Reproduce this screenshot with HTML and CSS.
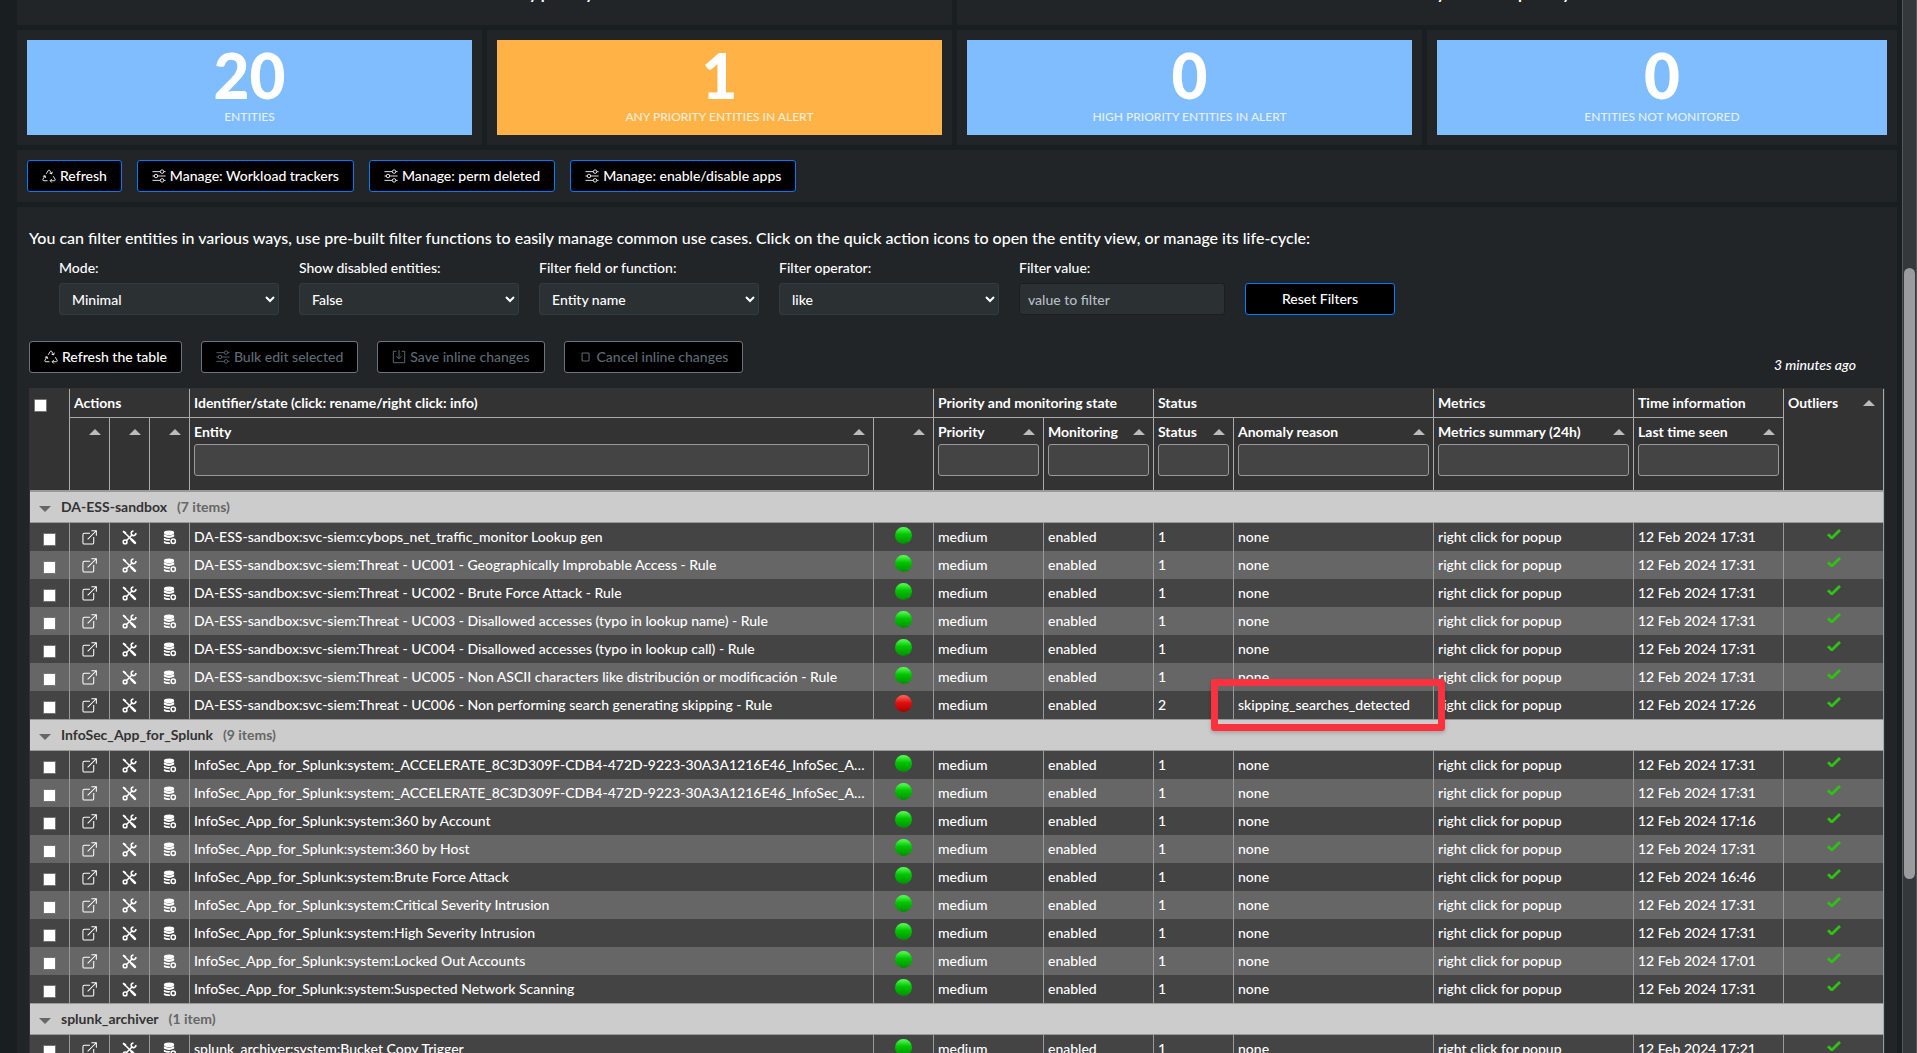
FILE: index.html
```html
<!DOCTYPE html>
<html lang="en">
  <head>
    <meta charset="UTF-8" />
    <meta name="viewport" content="width=device-width, initial-scale=1.0" />
    <title>Workload entities</title>
    <link rel="stylesheet" href="styles.css">
  </head>
  <body>
    <!-- Icon sprites -->
    <svg class="sprites" aria-hidden="true">
      <symbol id="i-recycle" viewBox="0 0 16 16">
        <g fill="none" stroke="currentColor" stroke-width="1">
          <path d="M4.800 5.500 7.300 1.500Q8 .7 8.700 1.500L11 5.500M8.600 4.800l2.500.8.7-2.500" />
          <path d="M12.800 8.200l2.200 3.500q.5 1.500-.9 1.700H9.500M11.300 11.300l-2 2.100 2 2.100" />
          <path d="M6.300 13.400H2.100q-1.600-.2-1.100-1.700L3.500 7.800M1 8.400l2.500-.8.8 2.600" />
        </g>
      </symbol>
      <symbol id="i-sliders" viewBox="0 0 16 16">
        <g fill="none" stroke="currentColor" stroke-width="1">
          <path d="M.5 3h9M13.500 3h2M.5 8h2M6.500 8h9M.5 13h9M13.500 13h2" />
          <circle cx="11.500" cy="3" r="2" />
          <circle cx="4.500" cy="8" r="2" />
          <circle cx="11.500" cy="13" r="2" />
        </g>
      </symbol>
      <symbol id="i-save" viewBox="0 0 16 16">
        <g fill="none" stroke="currentColor" stroke-width="1.1">
          <path d="M5 1.500H1.500v13h13v-13H11M8 0v10M5 7l3 3 3-3" />
        </g>
      </symbol>
      <symbol id="i-box" viewBox="0 0 16 16">
        <rect x="3.500" y="3.500" width="8" height="9" rx="1" fill="none" stroke="currentColor" stroke-width="1.200" />
      </symbol>
      <symbol id="i-open" viewBox="0 0 16 16">
        <g fill="none" stroke="currentColor" stroke-width="1.100">
          <path d="M8.500 3.500H2.500q-1.500 0-1.500 1.500v8.500q0 1.500 1.500 1.500H11q1.500 0 1.500-1.500V7.500" />
          <path d="M6 10 15.300.8M10 .8h5.300V6" />
        </g>
      </symbol>
      <symbol id="i-tools" viewBox="0 0 16 16">
        <g fill="none" stroke="currentColor">
          <path stroke-width="1.600" d="M1.500 1.500 11 11M4.800 11.200 11.200 4.800" />
          <path stroke-width="2.800" stroke-linecap="round" d="M10.300 10.300l3.500 3.500" />
          <path stroke-width="1.700" d="M14.800 3.200A2.500 2.500 0 1 1 12.300 1" />
          <circle cx="3.300" cy="12.700" r="2" stroke-width="1.600" />
        </g>
        <path fill="currentColor" d="M.5 1.500 1.500.5l3 2-.2 1.300-1.300.2z" />
      </symbol>
      <symbol id="i-db" viewBox="0 0 16 16">
        <g fill="currentColor">
          <ellipse cx="7.500" cy="3" rx="5.500" ry="2.500" />
          <path d="M2 4.500q5.500 3 11 0V7q-5.500 3-11 0zM2 8.200q3.500 2 7 1.300-1 1-1 2-3.500.3-6-1zM2 11.700q2.500 1.400 6 1.300.3 1 1 1.800-4.500.6-7-1z" />
        </g>
        <circle cx="12" cy="12" r="2.300" fill="none" stroke="currentColor" stroke-width="1.600" />
      </symbol>
      <symbol id="i-tick" viewBox="0 0 14 10">
        <path d="M1 5.200 4.800 9 13 1" fill="none" stroke="#2dc214" stroke-width="2.800" />
      </symbol>
    </svg>

    <main class="dashboard">
      <div class="row row-charts">
        <section class="panel"><h2>Entities distribution by priority</h2></section>
        <section class="panel"><h2>Entities distribution by state and priority</h2></section>
      </div>

      <div class="row row-singles">
        <section class="panel"><div class="single blue"><strong>20</strong><span>ENTITIES</span></div></section>
        <section class="panel"><div class="single orange"><strong>1</strong><span>ANY PRIORITY ENTITIES IN ALERT</span></div></section>
        <section class="panel"><div class="single blue"><strong>0</strong><span>HIGH PRIORITY ENTITIES IN ALERT</span></div></section>
        <section class="panel"><div class="single blue"><strong>0</strong><span>ENTITIES NOT MONITORED</span></div></section>
      </div>

      <section class="panel button-bar">
        <button class="btn btn-primary" type="button"><svg><use href="#i-recycle" /></svg>Refresh</button>
        <button class="btn btn-primary" type="button"><svg><use href="#i-sliders" /></svg>Manage: Workload trackers</button>
        <button class="btn btn-primary" type="button"><svg><use href="#i-sliders" /></svg>Manage: perm deleted</button>
        <button class="btn btn-primary" type="button"><svg><use href="#i-sliders" /></svg>Manage: enable/disable apps</button>
      </section>

      <section class="panel entities">
        <p class="intro">You can filter entities in various ways, use pre-built filter functions to easily manage common use cases. Click on the quick action icons to open the entity view, or manage its life-cycle:</p>

        <form class="filters">
          <div class="field">
            <label for="mode">Mode:</label>
            <select id="mode"><option>Minimal</option></select>
          </div>
          <div class="field">
            <label for="disabled">Show disabled entities:</label>
            <select id="disabled"><option>False</option></select>
          </div>
          <div class="field">
            <label for="filter-field">Filter field or function:</label>
            <select id="filter-field"><option>Entity name</option></select>
          </div>
          <div class="field">
            <label for="operator">Filter operator:</label>
            <select id="operator"><option>like</option></select>
          </div>
          <div class="field field-value">
            <label for="filter-value">Filter value:</label>
            <input id="filter-value" type="text" placeholder="value to filter">
          </div>
          <button class="btn btn-primary btn-reset" type="button">Reset Filters</button>
        </form>

        <div class="table-tools">
          <button class="btn" type="button"><svg><use href="#i-recycle" /></svg>Refresh the table</button>
          <button class="btn" type="button" disabled><svg><use href="#i-sliders" /></svg>Bulk edit selected</button>
          <button class="btn" type="button" disabled><svg><use href="#i-save" /></svg>Save inline changes</button>
          <button class="btn" type="button" disabled><svg><use href="#i-box" /></svg>Cancel inline changes</button>
          <em class="updated">3 minutes ago</em>
        </div>

        <table class="grid">
          <colgroup>
            <col class="w40"><col class="w40"><col class="w40"><col class="w40">
            <col>
            <col class="w60"><col class="w110"><col class="w110"><col class="w80">
            <col class="w200"><col class="w200"><col class="w150"><col class="w100">
          </colgroup>
          <thead>
            <tr class="head-groups">
              <th rowspan="2"><input type="checkbox" aria-label="Select all"></th>
              <th colspan="3">Actions</th>
              <th colspan="2">Identifier/state (click: rename/right click: info)</th>
              <th colspan="2">Priority and monitoring state</th>
              <th colspan="2">Status</th>
              <th>Metrics</th>
              <th>Time information</th>
              <th rowspan="2"><div class="title">Outliers<i class="sort"></i></div></th>
            </tr>
            <tr class="head-cols">
              <th><div class="title"><i class="sort"></i></div></th>
              <th><div class="title"><i class="sort"></i></div></th>
              <th><div class="title"><i class="sort"></i></div></th>
              <th><div class="title">Entity<i class="sort"></i></div><input type="search" aria-label="Entity"></th>
              <th><div class="title"><i class="sort"></i></div></th>
              <th><div class="title">Priority<i class="sort"></i></div><input type="search" aria-label="Priority"></th>
              <th><div class="title">Monitoring<i class="sort"></i></div><input type="search" aria-label="Monitoring"></th>
              <th><div class="title">Status<i class="sort"></i></div><input type="search" aria-label="Status"></th>
              <th><div class="title">Anomaly reason<i class="sort"></i></div><input type="search" aria-label="Anomaly reason"></th>
              <th><div class="title">Metrics summary (24h)<i class="sort"></i></div><input type="search" aria-label="Metrics summary"></th>
              <th><div class="title">Last time seen<i class="sort"></i></div><input type="search" aria-label="Last time seen"></th>
            </tr>
          </thead>
          <tbody id="entities"></tbody>
        </table>
      </section>
    </main>

    <div class="scrollbar"><div class="thumb"></div></div>
    <script src="main.js"></script>
  </body>
</html>
```
FILE: styles.css
```css
* {
  box-sizing: border-box;
}

body {
  margin: 0;
  height: 100vh;
  overflow: hidden;
  display: flex;
  background: #191e21;
  color: #fff;
  font-family: Lato, "Liberation Sans", sans-serif;
  font-size: 14px;
  font-weight: 500;
  line-height: 20px;
}

button,
input,
select {
  font: inherit;
  color: inherit;
}

.sprites {
  position: absolute;
  width: 0;
  height: 0;
}

.dashboard {
  flex: 1;
  min-width: 0;
  display: flex;
  flex-direction: column;
  gap: 5px;
  padding: 0 5px 0 17px;
}

.panel {
  background: #212528;
  padding: 10px;
}

.row {
  display: flex;
  flex-shrink: 0;
  gap: 5px;
}

.row-charts .panel {
  flex: 0 0 calc(50% - 5px);
}

.row-singles .panel {
  flex: 0 0 calc(25% - 5px);
}

.row .panel:last-child {
  flex: 1;
}

/* Charts are scrolled out, only their bottom edge is left */
.row-charts {
  margin-top: -27px;
}

.row-charts .panel {
  height: 52px;
}

.row-charts h2 {
  margin: 0;
  font-size: 16px;
  line-height: 20px;
  text-align: center;
}

/* Single values */
.single {
  height: 95px;
  display: flex;
  flex-direction: column;
  align-items: center;
}

.single strong {
  font-size: 62px;
  font-weight: 900;
  line-height: 71px;
}

.single span {
  font-size: 12px;
  line-height: 12px;
  color: rgba(255, 255, 255, 0.8);
}

.blue {
  background: #80bdff;
}

.orange {
  background: #ffb347;
}

/* Buttons */
.button-bar {
  display: flex;
  gap: 15px;
}

.btn {
  height: 32px;
  display: flex;
  align-items: center;
  justify-content: center;
  gap: 4px;
  padding: 0 14px;
  background: #000;
  border: 1px solid #6c757d;
  border-radius: 3px;
  white-space: nowrap;
}

.btn svg {
  width: 14px;
  height: 14px;
}

.btn:disabled {
  color: #5f6973;
}

.btn-primary {
  border-color: #007bff;
}

/* Filters */
.entities {
  padding: 21px 12px 0;
}

.intro {
  margin: 0;
  font-size: 16px;
}

.filters {
  display: flex;
  align-items: flex-end;
  gap: 20px;
  margin: 10px 0 0 30px;
}

.field {
  width: 220px;
  display: flex;
  flex-direction: column;
  gap: 5px;
}

.field-value {
  width: 206px;
}

.field select,
.field input {
  height: 32px;
  background: #2b3033;
  border: 1px solid #2f3c46;
  border-radius: 3px;
  padding: 0 8px;
}

.field input {
  border-color: #1a1e21;
}

.field input::placeholder {
  color: #b5bcc4;
}

.btn-reset {
  width: 150px;
}

.table-tools {
  display: flex;
  align-items: flex-start;
  gap: 19px;
  margin: 26px 0 13px;
}

.updated {
  margin: 14px 29px 0 auto;
}

/* Entities table */
.grid {
  width: 100%;
  table-layout: fixed;
  border-collapse: separate;
  border-spacing: 0;
  border: 1px solid #333;
  background: #333;
}

.w40 { width: 40px; }
.w60 { width: 60px; }
.w80 { width: 80px; }
.w100 { width: 100px; }
.w110 { width: 110px; }
.w150 { width: 150px; }
.w200 { width: 200px; }

.grid th,
.grid td {
  padding: 0 4px;
  text-align: left;
  white-space: nowrap;
  border-right: 1px solid #999;
}

.grid th {
  padding-top: 4px;
  vertical-align: top;
  border-color: #aaa;
}

.head-groups {
  height: 29px;
}

.head-groups th {
  border-bottom: 1px solid #aaa;
}

.head-cols {
  height: 73px;
}

.head-cols th,
.head-groups th[rowspan] {
  border-bottom: 1px solid #999;
}

.title {
  display: flex;
  align-items: center;
  justify-content: space-between;
  height: 20px;
  padding-right: 4px;
}

.sort {
  margin-left: auto;
  border: 6px solid transparent;
  border-top: 0;
  border-bottom-color: #bbb;
}

.grid th input[type="search"] {
  display: block;
  width: 100%;
  height: 32px;
  margin-top: 2px;
  background: #444;
  border: 1px solid #999;
  border-radius: 3px;
  appearance: none;
}

.grid input[type="checkbox"] {
  display: block;
  width: 13px;
  height: 13px;
  margin: 6px 0 0;
  appearance: none;
  background: #fff;
  border: 1px solid #767676;
  border-radius: 1px;
}

.item {
  height: 28px;
  background: #444;
}

.item.even {
  background: #666;
}

.grid .item td {
  overflow: hidden;
  text-overflow: ellipsis;
}

.grid .item td.icon {
  padding: 0;
}

.icon svg {
  display: block;
  margin: 0 auto;
  width: 15px;
  height: 15px;
}

.icon input[type="checkbox"] {
  margin: 5px 0 0 13px;
}

.icon .tick {
  width: 14px;
  height: 10px;
  margin-bottom: 6px;
}

.led {
  display: block;
  width: 17px;
  height: 17px;
  margin: 0 auto 4px;
  border-radius: 50%;
  background: linear-gradient(#5cff5c, #00c400 45%, #008f00);
}

.led.red {
  background: linear-gradient(#ff6b5c, #e01010 45%, #a80000);
}

.grid .group th {
  height: 32px;
  padding: 0 9px;
  vertical-align: middle;
  background: #ccc;
  color: #333;
  border-top: 1px solid #999;
  border-bottom: 1px solid #999;
}

.group i {
  display: inline-block;
  margin-right: 10px;
  border: 6px solid transparent;
  border-bottom: 0;
  border-top-color: #666;
}

.group span {
  margin-left: 10px;
  color: #666;
}

/* Marker around the anomaly */
.grid .item td.flagged {
  position: relative;
  overflow: visible;
}

.marker {
  position: absolute;
  inset: -12px -12px -12px -23px;
  border: 7px solid #fa3240;
  border-radius: 3px;
  box-shadow: 0 2px 4px rgba(0, 0, 0, 0.2);
}

/* Page scrollbar */
.scrollbar {
  width: 15px;
  height: 100vh;
  padding: 0 1px;
  background: #34383b;
  border-left: 1px solid #54585b;
  border-right: 1px solid #54585b;
}

.thumb {
  height: 58vh;
  margin-top: 268px;
  background: #999b9c;
  border-radius: 6px;
}
```
FILE: main.js
```js
const groups = [
  {
    name: 'DA-ESS-sandbox',
    prefix: 'DA-ESS-sandbox:svc-siem:',
    items: [
      ['cybops_net_traffic_monitor Lookup gen', '17:31'],
      ['Threat - UC001 - Geographically Improbable Access - Rule', '17:31'],
      ['Threat - UC002 - Brute Force Attack - Rule', '17:31'],
      ['Threat - UC003 - Disallowed accesses (typo in lookup name) - Rule', '17:31'],
      ['Threat - UC004 - Disallowed accesses (typo in lookup call) - Rule', '17:31'],
      ['Threat - UC005 - Non ASCII characters like distribución or modificación - Rule', '17:31'],
      ['Threat - UC006 - Non performing search generating skipping - Rule', '17:26', 'skipping_searches_detected'],
    ],
  },
  {
    name: 'InfoSec_App_for_Splunk',
    prefix: 'InfoSec_App_for_Splunk:system:',
    items: [
      ['_ACCELERATE_8C3D309F-CDB4-472D-9223-30A3A1216E46_InfoSec_App_for', '17:31'],
      ['_ACCELERATE_8C3D309F-CDB4-472D-9223-30A3A1216E46_InfoSec_App_for', '17:31'],
      ['360 by Account', '17:16'],
      ['360 by Host', '17:31'],
      ['Brute Force Attack', '16:46'],
      ['Critical Severity Intrusion', '17:31'],
      ['High Severity Intrusion', '17:31'],
      ['Locked Out Accounts', '17:01'],
      ['Suspected Network Scanning', '17:31'],
    ],
  },
  {
    name: 'splunk_archiver',
    prefix: 'splunk_archiver:system:',
    items: [['Bucket Copy Trigger', '17:21']],
  },
];

const icon = (name) => `<td class="icon"><svg><use href="#i-${name}" /></svg></td>`;

function renderItem(prefix, [name, time, anomaly], index) {
  return `<tr class="item ${index % 2 ? 'even' : ''}">
    <td class="icon"><input type="checkbox" aria-label="Select row"></td>
    ${icon('open')}${icon('tools')}${icon('db')}
    <td>${prefix}${name}</td>
    <td class="icon"><span class="led ${anomaly ? 'red' : ''}"></span></td>
    <td>medium</td>
    <td>enabled</td>
    <td>${anomaly ? 2 : 1}</td>
    <td class="${anomaly ? 'flagged' : ''}">${anomaly ? anomaly + '<span class="marker"></span>' : 'none'}</td>
    <td>right click for popup</td>
    <td>12 Feb 2024 ${time}</td>
    <td class="icon"><svg class="tick"><use href="#i-tick" /></svg></td>
  </tr>`;
}

document.getElementById('entities').innerHTML = groups.map((group) => {
  const count = group.items.length;
  return `<tr class="group"><th colspan="13"><i></i>${group.name}<span>(${count} item${count > 1 ? 's' : ''})</span></th></tr>` +
    group.items.map((item, i) => renderItem(group.prefix, item, i)).join('');
}).join('');
```
